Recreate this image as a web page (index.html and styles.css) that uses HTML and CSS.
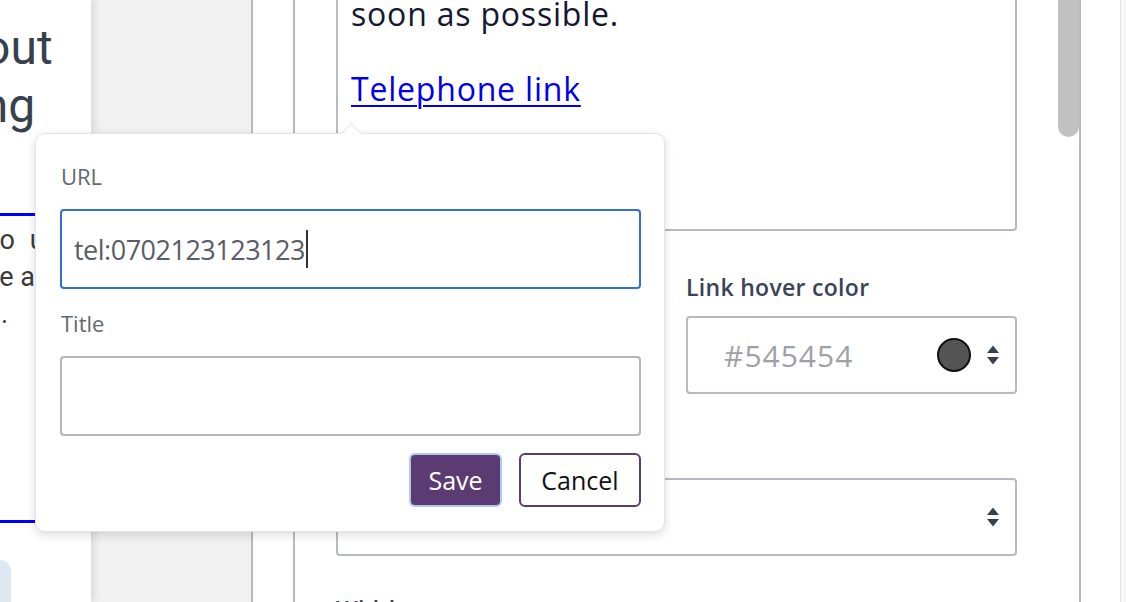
FILE: index.html
```html
<!DOCTYPE html>
<html lang="en">
<head>
    <meta charset="UTF-8">
    <meta name="viewport" content="width=device-width, initial-scale=1.0">
    <title>Link editor</title>
    <link rel="stylesheet" href="styles.css">
</head>
<body>
    <div class="app">
        <section class="preview">
            <h2 class="preview-title">
                <span class="title-line line-about">about</span>
                <span class="title-line line-booking">booking</span>
            </h2>
            <div class="preview-box">
                <div class="note-line note-1">to use</div>
                <div class="note-line note-2">be able</div>
                <div class="note-line note-3">.</div>
            </div>
            <div class="preview-chip"></div>
        </section>

        <div class="backdrop"></div>
        <div class="rail"></div>

        <section class="editor">
            <div class="editor-body">
                <div class="richtext">
                    <p>Send us a message and we reply as<br>soon as possible.</p>
                    <p><a href="tel:0702123123123">Telephone link</a></p>
                </div>

                <div class="field-row">
                    <div class="field">
                        <label>Link color</label>
                        <div class="color-input">
                            <span class="color-value">#0000ee</span>
                            <span class="swatch swatch-blue"></span>
                            <svg class="updown" viewBox="0 0 14 22"><path d="M7 1.5L13 9H1Z"/><path d="M1 13H13L7 20.5Z"/></svg>
                        </div>
                    </div>
                    <div class="field">
                        <label>Link hover color</label>
                        <div class="color-input">
                            <span class="color-value">#545454</span>
                            <span class="swatch"></span>
                            <svg class="updown" viewBox="0 0 14 22"><path d="M7 1.5L13 9H1Z"/><path d="M1 13H13L7 20.5Z"/></svg>
                        </div>
                    </div>
                </div>

                <div class="field">
                    <label>Link style</label>
                    <div class="select">
                        <span class="select-value"></span>
                        <svg class="updown" viewBox="0 0 14 22"><path d="M7 1.5L13 9H1Z"/><path d="M1 13H13L7 20.5Z"/></svg>
                    </div>
                </div>

                <div class="field field-last">
                    <label>Width</label>
                </div>
            </div>
            <div class="scroll-track"><div class="scroll-thumb"></div></div>
        </section>

        <div class="side-gutter"></div>
        <div class="edge"></div>
    </div>

    <div class="link-popover">
        <label class="pop-label">URL</label>
        <div class="pop-input is-focused">tel:0702123123123<span class="caret"></span></div>
        <label class="pop-label pop-label-title">Title</label>
        <div class="pop-input"></div>
        <div class="pop-actions">
            <button class="btn btn-save">Save</button>
            <button class="btn btn-cancel">Cancel</button>
        </div>
    </div>
</body>
</html>
```

FILE: styles.css
```css
body {
    margin: 0;
    padding: 0;
    height: 602px;
    overflow: hidden;
    font-family: 'Open Sans', 'Noto Sans', sans-serif;
    background-color: #fff;
}
.app {
    display: flex;
    height: 602px;
}

/* page preview on the left */
.preview {
    position: relative;
    z-index: 1;
    width: 91px;
    flex-shrink: 0;
    background-color: #fff;
    overflow: hidden;
    box-shadow: 2px 0 9px rgba(0, 0, 0, 0.13);
    font-family: Roboto, 'Liberation Sans', sans-serif;
}
.preview-title {
    margin: 19px 0 0;
    font-size: 48px;
    font-weight: 400;
    line-height: 58px;
    color: #37414d;
}
.title-line {
    display: block;
    white-space: nowrap;
}
.line-about {
    margin-left: -70px;
}
.line-booking {
    margin-left: -136px;
}
.preview-box {
    margin-top: 78px;
    height: 298px;
    padding-top: 6px;
    border-top: 3px solid #0000ff;
    border-bottom: 3px solid #0000ff;
    width: 300px;
    font-size: 27px;
    line-height: 37px;
    color: #3a3a3a;
}
.note-line {
    white-space: nowrap;
}
.note-1 {
    margin-left: -9px;
    word-spacing: 8px;
}
.note-2 {
    margin-left: -16px;
}
.note-3 {
    margin-left: 1px;
}
.preview-chip {
    margin-top: 37px;
    width: 11px;
    height: 60px;
    background-color: #dde8f3;
    border-top-right-radius: 13px;
}

.backdrop {
    width: 160px;
    flex-shrink: 0;
    background-color: #f1f1f1;
}
.rail {
    width: 40px;
    flex-shrink: 0;
    border-left: 2px solid #b8bac3;
    background-color: #fff;
}

/* editor panel */
.editor {
    display: flex;
    width: 784px;
    flex-shrink: 0;
    border-left: 2px solid #b8bac3;
    border-right: 2px solid #b8bac3;
    background-color: #fff;
    overflow: hidden;
}
.editor-body {
    flex: 1;
    margin-top: -57px;
    padding: 0 41px;
    display: flex;
    flex-direction: column;
}
.editor-body > * {
    flex-shrink: 0;
}
.richtext {
    box-sizing: border-box;
    height: 288px;
    padding: 12px 13px;
    border: 2px solid #b8bac3;
    border-radius: 4px;
    font-size: 32px;
    line-height: 38px;
    letter-spacing: 0.8px;
    color: #141833;
}
.richtext p {
    margin: 0 0 37px;
}
.richtext a {
    color: #0000ee;
    text-decoration-thickness: 2px;
    text-underline-offset: 4px;
}
.field-row {
    display: grid;
    grid-template-columns: 1fr 331px;
    gap: 22px;
}
.field {
    margin-top: 43px;
    display: flex;
    flex-direction: column;
}
.field-row .field {
    margin-top: 44px;
}
.field label {
    font-size: 23px;
    font-weight: 600;
    line-height: 24px;
    letter-spacing: 0.3px;
    color: #3a4358;
    margin-bottom: 17px;
}
.field-last {
    margin-top: 41px;
}
.color-input,
.select {
    box-sizing: border-box;
    height: 78px;
    display: flex;
    align-items: center;
    border: 2px solid #b8bac3;
    border-radius: 4px;
    padding: 0 15px 0 36px;
}
.color-value,
.select-value {
    flex: 1;
    font-size: 30px;
    letter-spacing: 1px;
    color: #9da1a7;
}
.swatch {
    box-sizing: border-box;
    width: 34px;
    height: 34px;
    border-radius: 50%;
    border: 2px solid #111;
    background-color: #545454;
    margin-right: 15px;
}
.swatch-blue {
    background-color: #0000ee;
}
.updown {
    width: 14px;
    height: 22px;
    fill: #36434f;
}
.scroll-track {
    width: 21px;
    flex-shrink: 0;
}
.scroll-thumb {
    height: 147px;
    margin-top: -10px;
    background-color: #c1c1c1;
    border-radius: 0 0 11px 11px;
}
.side-gutter {
    width: 39px;
    flex-shrink: 0;
    background-color: #fff;
}
.edge {
    flex: 1;
    border-left: 1px solid #e4e4e6;
    background-color: #f6f6f6;
}

/* link popover */
.link-popover {
    position: absolute;
    left: 35px;
    top: 133px;
    z-index: 5;
    box-sizing: border-box;
    width: 630px;
    height: 399px;
    padding: 29px 23px 24px 24px;
    background-color: #fff;
    border: 1px solid #e4e4e7;
    border-radius: 10px;
    box-shadow: 0 3px 10px rgba(0, 0, 0, 0.14);
    display: flex;
    flex-direction: column;
}
.link-popover::before {
    content: '';
    position: absolute;
    top: -8px;
    left: 308px;
    width: 14px;
    height: 14px;
    background-color: #fff;
    border-top: 1px solid #e4e4e7;
    border-left: 1px solid #e4e4e7;
    transform: rotate(45deg);
}
.pop-label {
    font-size: 22px;
    line-height: 26px;
    color: #63676e;
    margin-bottom: 20px;
    padding-left: 1px;
}
.pop-label-title {
    margin-top: 21px;
}
.pop-input {
    box-sizing: border-box;
    height: 80px;
    flex-shrink: 0;
    display: flex;
    align-items: center;
    padding-left: 12px;
    border: 2px solid #b4b6bf;
    border-radius: 4px;
    font-size: 27px;
    letter-spacing: -0.5px;
    color: #595d65;
}
.pop-input.is-focused {
    border-color: #2f6fd6;
}
.caret {
    display: inline-block;
    width: 2px;
    height: 38px;
    margin-left: 1px;
    background-color: #333;
}
.pop-actions {
    margin-top: 17px;
    display: flex;
    justify-content: flex-end;
    gap: 17px;
}
.btn {
    box-sizing: border-box;
    height: 54px;
    border-radius: 6px;
    font-family: 'Open Sans', 'Noto Sans', sans-serif;
    font-size: 25px;
    cursor: pointer;
}
.btn-save {
    width: 93px;
    background-color: #5c3b73;
    border: 2px solid #a9cbf2;
    color: #fff;
}
.btn-cancel {
    width: 122px;
    background-color: #fff;
    border: 2px solid #5c3b73;
    color: #111;
}
```
